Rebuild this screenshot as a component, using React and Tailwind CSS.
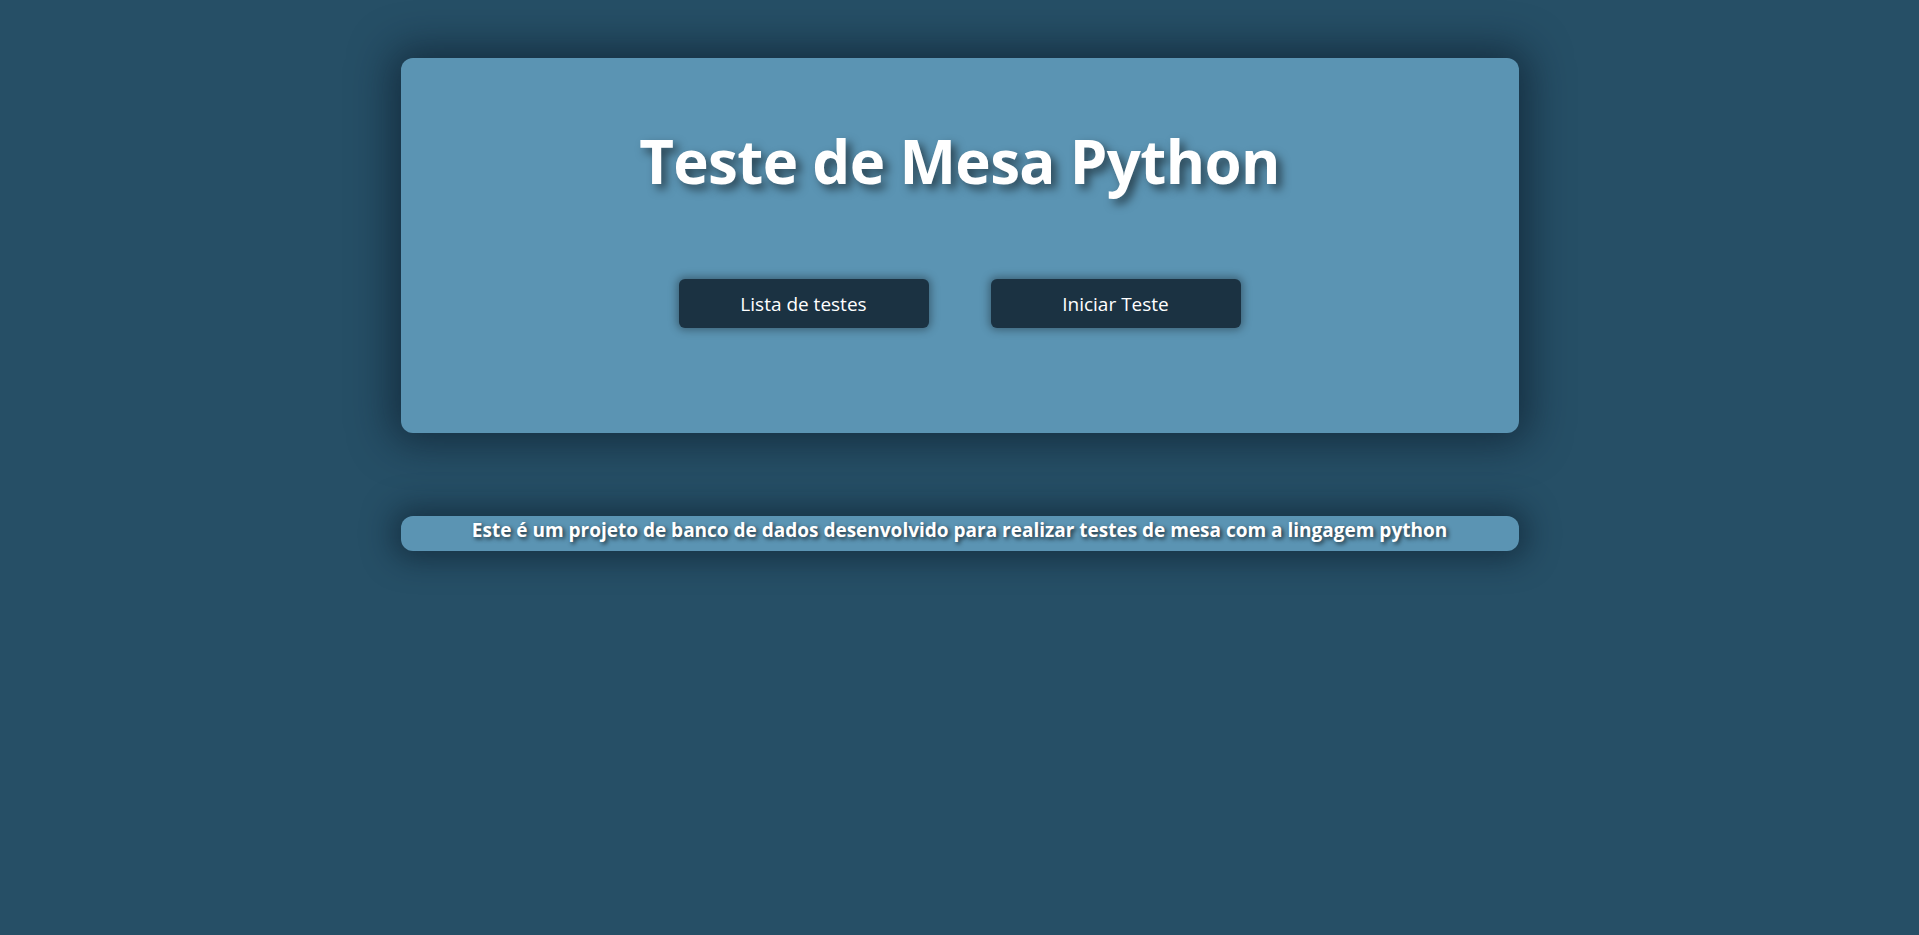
const App = () => {
  return (
    <div className="min-h-screen bg-[#264f66] pt-[58px] font-['Open_Sans',sans-serif]">
      {/* cartão principal */}
      <div className="mx-auto w-[1118px] h-[375px] bg-[#5b94b3] rounded-xl shadow-[0_0_40px_10px_rgba(10,25,40,0.6)] flex flex-col items-center">
        <h1 className="mt-[58px] text-[60px] leading-[90px] font-bold text-white tracking-[-0.65px] [text-shadow:5px_5px_10px_rgba(0,0,0,0.55)]">
          Teste de Mesa Python
        </h1>
        <div className="mt-[73px] flex gap-[62px]">
          <button className="w-[250px] h-[49px] pt-[2px] bg-[#1b3242] text-white text-[19px] rounded-md shadow-[0_0_8px_2px_rgba(0,0,0,0.35)]">
            Lista de testes
          </button>
          <button className="w-[250px] h-[49px] pt-[2px] bg-[#1b3242] text-white text-[19px] rounded-md shadow-[0_0_8px_2px_rgba(0,0,0,0.35)]">
            Iniciar Teste
          </button>
        </div>
      </div>

      {/* descrição */}
      <div className="mx-auto mt-[83px] w-[1118px] h-[35px] bg-[#5b94b3] rounded-xl shadow-[0_0_30px_8px_rgba(10,25,40,0.55)] flex justify-center">
        <p className="text-white font-bold text-[19px] leading-[28px] tracking-[0px] [text-shadow:2px_2px_4px_rgba(0,0,0,0.7)]">
          Este é um projeto de banco de dados desenvolvido para realizar testes de mesa com a lingagem python
        </p>
      </div>
    </div>
  );
};

export default App;
